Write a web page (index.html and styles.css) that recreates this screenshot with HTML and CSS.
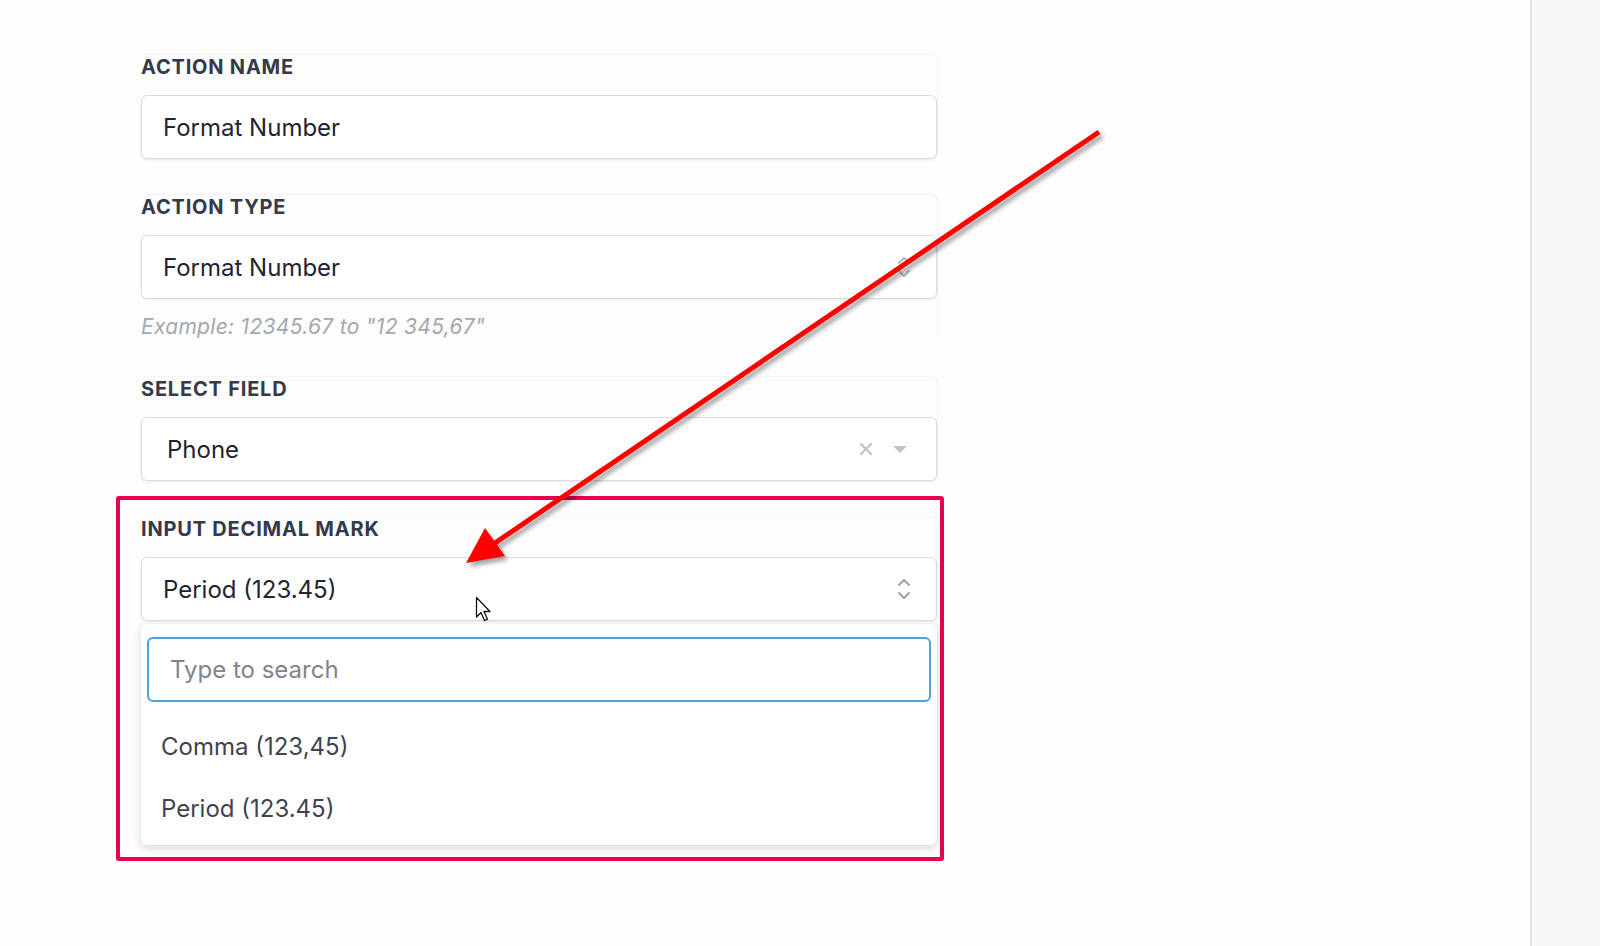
FILE: index.html
```html
<!DOCTYPE html>
<html>
<head>
<meta charset="utf-8">
<link rel="stylesheet" href="styles.css">
</head>
<body>
<div class="app">
  <main class="main">
    <div class="form">
      <div class="field">
        <div class="label">ACTION NAME</div>
        <div class="input">Format Number</div>
      </div>
      <div class="field">
        <div class="label">ACTION TYPE</div>
        <div class="input select">
          <span>Format Number</span>
          <svg class="updown faint" width="14" height="22" viewBox="0 0 14 22"><path d="M2 7 L7 2 L12 7 M2 15 L7 20 L12 15" fill="none" stroke="currentColor" stroke-width="2" stroke-linecap="round" stroke-linejoin="round"/></svg>
        </div>
        <div class="hint">Example: 12345.67 to "12 345,67"</div>
      </div>
      <div class="field">
        <div class="label">SELECT FIELD</div>
        <div class="input select phone">
          <span>Phone</span>
          <span class="icons">
            <svg width="14" height="14" viewBox="0 0 14 14"><path d="M2 2 L12 12 M12 2 L2 12" stroke="#c2c4c8" stroke-width="2.4" stroke-linecap="round"/></svg>
            <svg width="16" height="8" viewBox="0 0 16 8"><path d="M1 1 L15 1 L8 8 Z" fill="#c2c4c8"/></svg>
          </span>
        </div>
      </div>
      <div class="field open">
        <div class="label">INPUT DECIMAL MARK</div>
        <div class="input select">
          <span>Period (123.45)</span>
          <svg class="updown" width="14" height="22" viewBox="0 0 14 22"><path d="M2 7 L7 2 L12 7 M2 15 L7 20 L12 15" fill="none" stroke="currentColor" stroke-width="2" stroke-linecap="round" stroke-linejoin="round"/></svg>
        </div>
        <div class="menu">
          <div class="search">Type to search</div>
          <div class="option">Comma (123,45)</div>
          <div class="option">Period (123.45)</div>
        </div>
      </div>
    </div>

    <div class="highlight"></div>

    <svg class="arrow" width="1530" height="946" viewBox="0 0 1530 946">
      <line x1="1099" y1="132" x2="492" y2="545" stroke="#ff0000" stroke-width="5" stroke-linecap="butt"/>
      <polygon points="466,563 485,528 505,556" fill="#ff0000"/>
    </svg>

    <svg class="cursor" width="20" height="28" viewBox="0 0 20 28">
      <path d="M1.5 1.5 L1.5 21 L6 16.5 L9.5 24.5 L12.5 23.2 L9 15.5 L15 15.5 Z" fill="#fff" stroke="#111" stroke-width="1.3" stroke-linejoin="round"/>
    </svg>
  </main>
  <aside class="side"></aside>
</div>
</body>
</html>
```

FILE: styles.css
```css
* { box-sizing: border-box; }
html, body { margin: 0; padding: 0; }
body {
  font-family: Inter, "Noto Sans", sans-serif;
  background: #fff;
  color: #1f2430;
}
.app {
  display: flex;
  width: 1600px;
  height: 946px;
  overflow: hidden;
}
.main {
  flex: 1;
  position: relative;
  padding: 55px 0 0 141px;
  background: #fdfdfd;
}
.side {
  width: 70px;
  border-left: 2px solid #dfe3e9;
  background: #f7f8fa;
}
.form {
  width: 796px;
  display: flex;
  flex-direction: column;
  gap: 36px;
}
.field {
  display: flex;
  flex-direction: column;
  box-shadow: 1px -1px 0 0 #f3f4f6;
  border-radius: 6px;
}
.label {
  font-size: 20px;
  font-weight: 700;
  line-height: 24px;
  color: #343a49;
  letter-spacing: 0.8px;
  margin-bottom: 16px;
}
.input {
  height: 64px;
  border: 1px solid #d9dce2;
  border-radius: 6px;
  background: #fff;
  box-shadow: 0 1px 2px rgba(30, 40, 60, 0.08);
  display: flex;
  align-items: center;
  padding: 0 20px 0 21px;
  font-size: 24px;
  color: #1f2430;
}
.select {
  justify-content: space-between;
}
.phone {
  padding-left: 25px;
  padding-right: 28px;
}
.updown {
  color: #9aa0aa;
  margin-right: 5px;
}
.updown.faint {
  color: #b5bac2;
}
.icons {
  display: flex;
  align-items: center;
  gap: 19px;
}
.hint {
  margin-top: 16px;
  margin-bottom: 2px;
  font-size: 21px;
  line-height: 24px;
  font-style: italic;
  color: #a3a7af;
  letter-spacing: 0.3px;
}
.menu {
  margin-top: 3px;
  background: #fff;
  border-radius: 6px;
  box-shadow: 0 3px 10px rgba(0, 0, 0, 0.14), 0 0 1px rgba(0,0,0,0.08);
  padding: 13px 6px 6px 6px;
  display: flex;
  flex-direction: column;
}
.search {
  height: 65px;
  border: 2px solid #4aa1dc;
  border-radius: 6px;
  display: flex;
  align-items: center;
  padding-left: 21px;
  font-size: 24px;
  color: #80858e;
  margin-bottom: 13px;
}
.option {
  height: 62px;
  display: flex;
  align-items: center;
  padding-left: 14px;
  font-size: 24px;
  color: #3f4450;
}
.highlight {
  position: absolute;
  left: 116px;
  top: 496px;
  width: 828px;
  height: 365px;
  border: 4px solid #e6004e;
  border-radius: 3px;
  pointer-events: none;
}
.arrow {
  position: absolute;
  left: 0;
  top: 0;
  filter: drop-shadow(3px 4px 2px rgba(0, 0, 0, 0.35));
  pointer-events: none;
}
.cursor {
  position: absolute;
  left: 475px;
  top: 596px;
}
```
